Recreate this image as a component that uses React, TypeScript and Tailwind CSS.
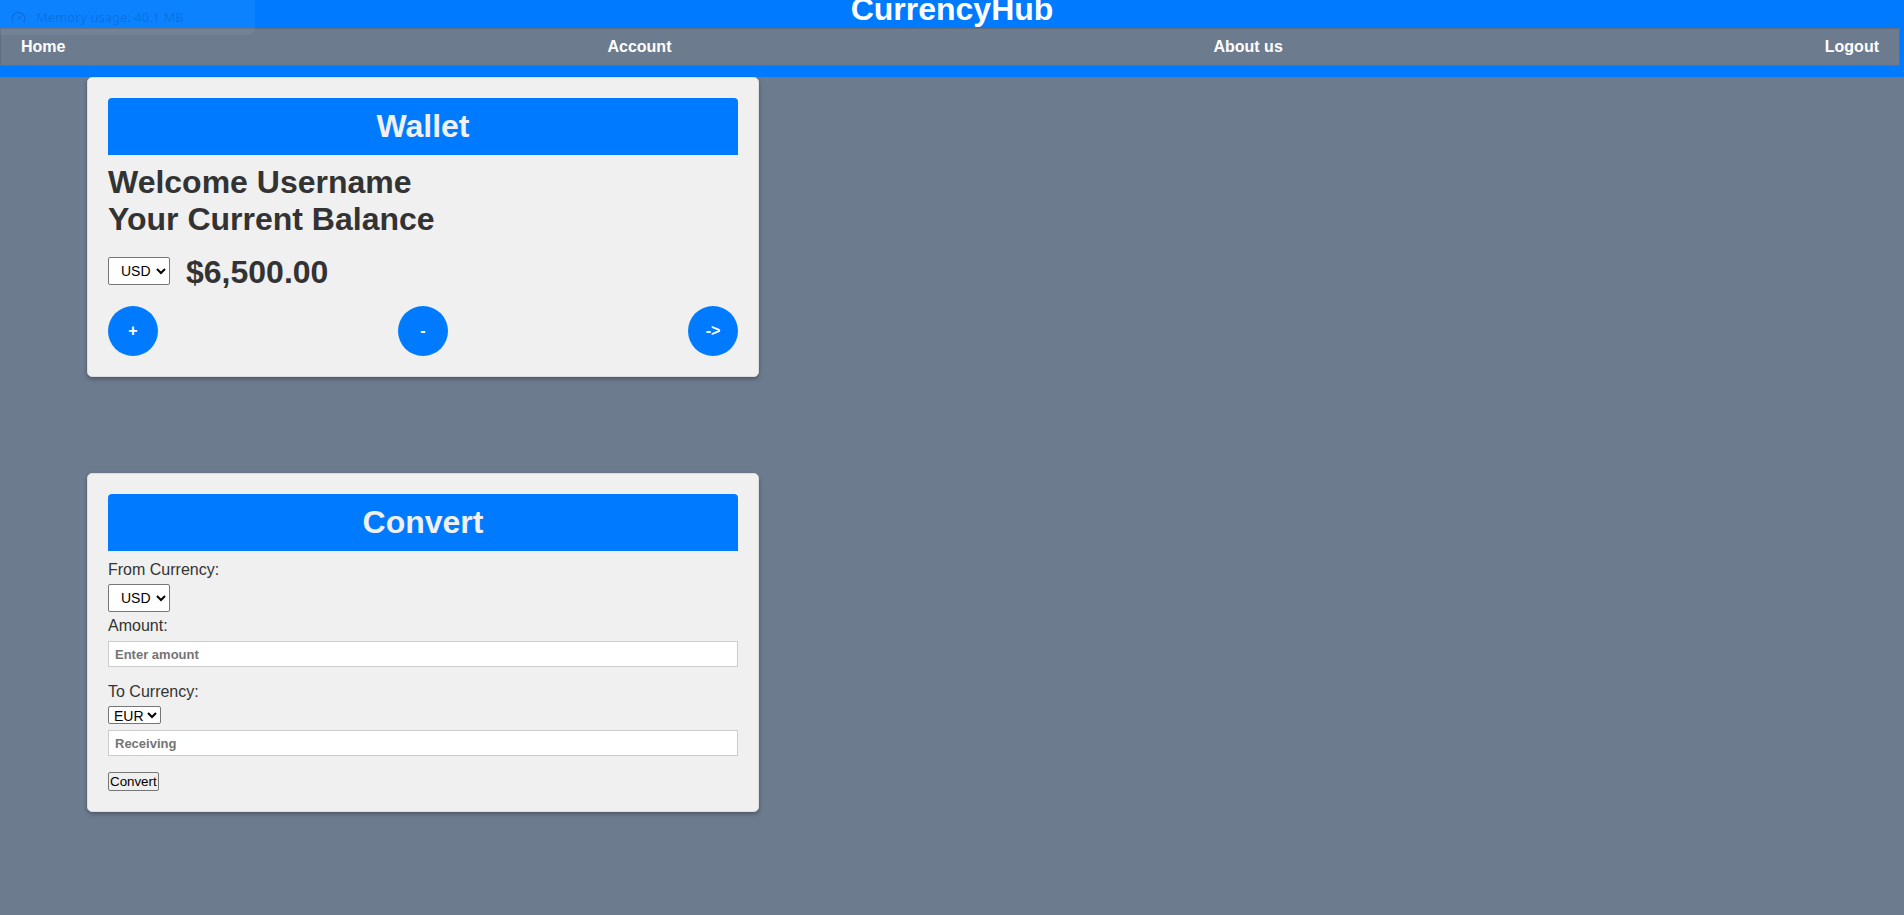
import { Gauge } from 'lucide-react';

function Wallet() {
  return (
    <section className="w-[672px] rounded-[5px] border border-[#dcdcdc] bg-[#f0f0f0] p-5 shadow-[0_2px_4px_rgba(0,0,0,0.3)]">
      <h2 className="rounded-t-[4px] bg-[#007bff] py-[10px] text-center text-[32px] font-bold leading-[37px] text-[#f0f0f0]">
        Wallet
      </h2>
      <h3 className="mt-[9px] text-[32px] font-bold leading-[37px] text-[#333]">
        Welcome Username
        <br />
        Your Current Balance
      </h3>
      <div className="mt-[16px] flex items-start gap-4">
        <select className="mt-[3px] h-[28px] w-[62px] rounded-[2px] border border-[#767676] bg-white pl-[8px] text-[14px] text-black">
          <option>USD</option>
          <option>EUR</option>
          <option>GBP</option>
        </select>
        <span className="text-[32px] font-bold leading-[37px] text-[#333]">$6,500.00</span>
      </div>
      <div className="mt-[15px] flex items-center justify-between">
        <button className="flex h-[50px] w-[50px] items-center justify-center rounded-full bg-[#007bff] text-[16px] font-bold text-white">
          +
        </button>
        <button className="flex h-[50px] w-[50px] items-center justify-center rounded-full bg-[#007bff] text-[16px] font-bold text-white">
          -
        </button>
        <button className="flex h-[50px] w-[50px] items-center justify-center rounded-full bg-[#007bff] text-[16px] font-bold text-white">
          -&gt;
        </button>
      </div>
    </section>
  );
}

function Converter() {
  return (
    <section className="mt-[96px] flex w-[672px] flex-col items-start rounded-[5px] border border-[#dcdcdc] bg-[#f0f0f0] p-5 shadow-[0_2px_4px_rgba(0,0,0,0.3)]">
      <h2 className="w-full rounded-t-[4px] bg-[#007bff] py-[10px] text-center text-[32px] font-bold leading-[37px] text-[#f0f0f0]">
        Convert
      </h2>
      <label className="mt-[10px] text-[16px] leading-[18px] text-[#333]">From Currency:</label>
      <select className="mt-[5px] h-[28px] w-[62px] rounded-[2px] border border-[#767676] bg-white pl-[8px] text-[14px] text-black">
        <option>USD</option>
        <option>EUR</option>
      </select>
      <label className="mt-[5px] text-[16px] leading-[18px] text-[#333]">Amount:</label>
      <input
        placeholder="Enter amount"
        className="mt-[6px] h-[26px] w-full border border-[#ccc] bg-white px-[6px] text-[13px] font-bold text-black placeholder:text-[#757575]"
      />
      <label className="mt-[16px] text-[16px] leading-[18px] text-[#333]">To Currency:</label>
      <select className="mt-[5px] h-[18px] w-[53px] rounded-[2px] border border-[#767676] bg-white pl-[1px] text-[14px] leading-none text-black">
        <option>EUR</option>
        <option>USD</option>
      </select>
      <input
        placeholder="Receiving"
        className="mt-[6px] h-[26px] w-full border border-[#ccc] bg-white px-[6px] text-[13px] font-bold text-black placeholder:text-[#757575]"
      />
      <button className="mt-[16px] h-[19px] rounded-[2px] border border-[#767676] bg-[#efefef] px-[1px] text-[13.33px] leading-none text-black">
        Convert
      </button>
    </section>
  );
}

export default function App() {
  return (
    <div className="relative min-h-screen bg-[#6d7b8f] font-['Liberation_Sans',Arial,sans-serif]">
      <header className="flex flex-col bg-[#007bff] pb-[11px]">
        <h1 className="-mt-[9px] text-center text-[32px] font-bold leading-[37px] text-white">CurrencyHub</h1>
        <nav className="mr-[4px] flex h-[38px] items-center justify-between border border-black/10 bg-[#6d7b8f] px-5 text-[16px] font-bold text-white">
          <a href="#">Home</a>
          <a href="#">Account</a>
          <a href="#">About us</a>
          <a href="#">Logout</a>
        </nav>
      </header>

      <main className="flex flex-col items-start pb-20 pl-[87px]">
        <Wallet />
        <Converter />
      </main>

      <div className="absolute left-0 top-0 flex h-[35px] w-[255px] items-center gap-[10px] rounded-br-[8px] bg-white/5 pl-[11px] font-['Noto_Sans',sans-serif] text-[13px] text-black/15">
        <Gauge className="h-[15px] w-[15px]" />
        <span>Memory usage: 40.1 MB</span>
      </div>
    </div>
  );
}
